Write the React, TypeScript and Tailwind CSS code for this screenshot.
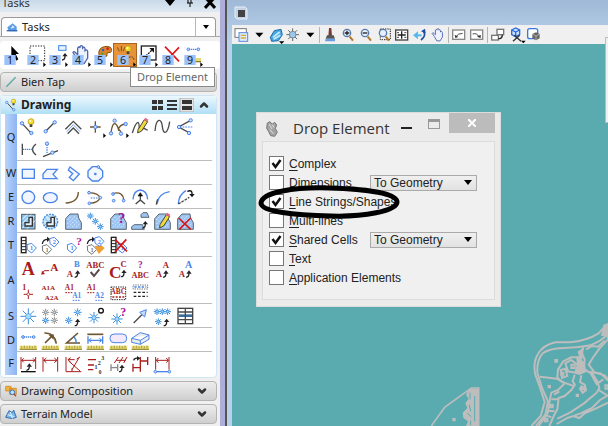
import { useState } from 'react'
import type { ReactNode } from 'react'
import { ChevronDown, ChevronUp } from 'lucide-react'

const BLUE = '#4a84e8'
const DARK = '#4a4a4a'
const BROWN = '#6e5630'
const RED = '#a81c1c'

type LineProps = { d: string; c?: string; w?: number; fill?: string; dash?: string }

const P = ({ d, c = DARK, w = 4, fill = 'none', dash }: LineProps) => (
  <path d={d} stroke={c} strokeWidth={w} fill={fill} strokeDasharray={dash} />
)

const Node = ({ x, y, r = 5 }: { x: number; y: number; r?: number }) => (
  <circle cx={x} cy={y} r={r} fill="#c9ddff" stroke={BLUE} strokeWidth={3} />
)

const Txt = ({ x, y, s, c = RED, children }: { x: number; y: number; s: number; c?: string; children: ReactNode }) => (
  <text x={x} y={y} fontSize={s} fill={c} textAnchor="middle" fontWeight="bold" className="font-['Liberation_Serif',serif]">
    {children}
  </text>
)

const Fly = () => <path d="M58 55l8 7l-8 7z" fill="#000" />

const Star = ({ x, y, r, c = '#3d8fe0' }: { x: number; y: number; r: number; c?: string }) => {
  const h = r * 0.7
  return (
    <g>
      <path
        d={`M${x - r} ${y}H${x + r}M${x} ${y - r}V${y + r}M${x - h} ${y - h}L${x + h} ${y + h}M${x + h} ${y - h}L${x - h} ${y + h}`}
        stroke={c}
        strokeWidth={3}
      />
      <circle cx={x} cy={y} r={r * 0.35} fill="#a8dcff" stroke={c} strokeWidth={2} />
    </g>
  )
}

const Blob = () => (
  <g>
    <path d="M11 58V26L24 12H48L50 24L58 38V58Z" fill="#9cc4f2" stroke="#5d6670" strokeWidth={3} />
    <path d="M16 30L28 18M16 42L42 16M18 52L46 24M30 52L50 32M42 52L54 40" stroke="#e4f1ff" strokeWidth={3} strokeDasharray="5 4" />
  </g>
)

const Arrow = ({ x, y }: { x: number; y: number }) => (
  <g transform={`translate(${x} ${y})`}>
    <path d="M0 20Q9 20 9 8" stroke="#222" strokeWidth={4} fill="none" />
    <path d="M1 9L9 -1L17 9Z" fill="#222" />
  </g>
)

const Hop = () => (
  <g>
    <path d="M10 30Q12 16 26 16" stroke="#222" strokeWidth={4} fill="none" />
    <path d="M24 8L34 16L24 24Z" fill="#222" />
  </g>
)

const Tag = ({ x, y, n, c = BLUE }: { x: number; y: number; n?: string; c?: string }) => (
  <g>
    <path d={`M${x - 14} ${y - 10}L${x} ${y - 14}L${x + 14} ${y}L${x} ${y + 15}L${x - 13} ${y + 5}Z`} fill="#fff" stroke={c} strokeWidth={3} />
    <Txt x={x} y={y + 7} s={19} c={c}>{n}</Txt>
  </g>
)

const Ruler = () => (
  <g>
    <rect x={8} y={50} width={52} height={12} fill="#e6db74" />
    <path d="M8 61H60" stroke="#8d7f2a" strokeWidth={3} />
    <path d="M14 52v6M22 50v8M30 52v6M38 50v8M46 52v6M54 50v8" stroke="#8d7f2a" strokeWidth={2} />
  </g>
)

const Bulb = ({ x, y }: { x: number; y: number }) => (
  <g>
    <circle cx={x} cy={y} r={9} fill="#f4dc2c" stroke="#b09414" strokeWidth={2} />
    <rect x={x - 4} y={y + 8} width={8} height={8} fill="#444" />
    <circle cx={x - 2} cy={y - 2} r={3} fill="#fffbd0" />
  </g>
)

const Pencil = () => (
  <g>
    <path d="M27 44L46 14L56 20L38 48L26 54Z" fill="#f0da3a" stroke="#444" strokeWidth={3} />
    <path d="M44 14L49 8L58 14L55 20Z" fill="#e8638c" />
  </g>
)

const Stack = () => (
  <g>
    <rect x={13} y={10} width={14} height={46} fill="#fff" stroke="#222" strokeWidth={4} />
    <path d="M13 20H27M13 29H27M13 38H27M13 47H27" stroke="#222" strokeWidth={3} />
  </g>
)

const Cross = () => <path d="M14 24L50 58M50 24L16 58" stroke="#d81414" strokeWidth={5} />

type Tool = [string, ReactNode]
type ToolRow = { key: string; tools: Tool[][] }

const toolRows: ToolRow[] = [
  {
    key: 'Q',
    tools: [
      [
        ['SmartLine', <><P d="M18 28L40 52" /><Node x={15} y={25} /><Node x={43} y={54} /><Bulb x={42} y={20} /></>],
        ['Line', <><P d="M20 49L47 22" /><Node x={20} y={49} /><Node x={47} y={22} /></>],
        ['Multi-line', <><P d="M10 43L34 19L58 43M17 56L34 39L51 56" /><P d="M14 50L34 29L54 50" c="#78a4ee" w={3} /></>],
        ['Point', <><P d="M34 19V53M18 36H50" c={BROWN} /><Node x={34} y={36} /><Fly /></>],
        ['Curve', <><P d="M12 53Q16 24 24 26Q30 28 34 42Q40 28 56 27M34 42L42 50" c={BROWN} /><Node x={12} y={55} /><Node x={23} y={17} /><Node x={42} y={56} /><Node x={56} y={27} /><Fly /></>],
        ['Stream curve', <><P d="M10 54Q20 22 27 22Q32 24 30 48Q40 40 46 40Q52 46 56 44" /><Pencil /></>],
        ['B-spline', <P d="M12 48C15 8 32 8 34 34S50 60 56 20" />],
        ['Angle bisector', <><P d="M50 16L14 36L45 53" /><P d="M18 36H58" c={BLUE} w={3} dash="5 3" /><Node x={50} y={16} /><Node x={45} y={54} /><Node x={15} y={36} /></>],
      ],
      [
        ['Minimum distance line', <><P d="M16 17V51M57 18Q36 34 57 51" /><P d="M18 34H46" c={BLUE} dash="4 2" /></>],
        ['Line at angle', <><P d="M12 56L57 38" /><P d="M24 20V48" c={BLUE} dash="4 3" /><Node x={24} y={17} /><Node x={40} y={44} /></>],
      ],
    ],
  },
  {
    key: 'W',
    tools: [[
      ['Block', <rect x={16} y={22} width={36} height={27} fill="#f2f6ff" stroke={BLUE} strokeWidth={4} />],
      ['Shape', <P d="M24 22H55L42 37L54 50H12V36Z" c={BLUE} fill="#f2f6ff" />],
      ['Orthogonal shape', <P d="M24 15L52 36L34 56L22 46L32 35L19 24Z" c={BLUE} fill="#f2f6ff" />],
      ['Regular polygon', <><P d="M25 14H43L56 27V45L43 57H25L12 45V27Z" c={BLUE} fill="#f2f6ff" /><circle cx={34} cy={36} r={4} fill={BLUE} /><Node x={43} y={15} r={4} /></>],
    ]],
  },
  {
    key: 'E',
    tools: [[
      ['Circle', <circle cx={34} cy={34} r={19} fill="#f0f5ff" stroke={BLUE} strokeWidth={4} />],
      ['Ellipse', <ellipse cx={34} cy={35} rx={21} ry={15} fill="#f0f5ff" stroke={BLUE} strokeWidth={4} />],
      ['Arc', <P d="M11 51Q48 50 49 18" c={BROWN} />],
      ['Half ellipse', <><P d="M14 20Q46 22 47 35Q46 50 16 52" c={BROWN} /><P d="M20 36H42" c={BLUE} w={3} dash="5 3" /><Node x={15} y={20} r={4} /><Node x={49} y={35} r={4} /><Node x={16} y={52} r={4} /></>],
      ['Quarter ellipse', <><P d="M20 22Q48 16 50 42" c={BROWN} /><Node x={18} y={24} r={4} /><Node x={20} y={44} r={4} /><Node x={50} y={44} r={4} /></>],
      ['Modify arc radius', <><P d="M12 40Q14 14 34 12Q54 14 56 40" c={BLUE} /><P d="M34 46V26M20 54L34 42L48 54" /><P d="M27 30L34 20L41 30Z" fill="#111" c="#111" w={2} /></>],
      ['Modify arc angle', <><P d="M18 54Q22 22 56 17" c={BLUE} /><P d="M16 56Q17 46 20 40" /></>],
      ['Modify arc axis', <><P d="M13 54Q14 26 36 14" c={BLUE} /><P d="M13 54L46 34" dash="8 3" /><P d="M40 16Q56 10 54 26" c="#111" /><path d="M46 24H62L54 34Z" fill="#111" /></>],
    ]],
  },
  {
    key: 'R',
    tools: [[
      ['Hatch area', <><rect x={14} y={13} width={40} height={44} fill="#8cc8f4" stroke="#555" strokeWidth={3} /><P d="M16 28L30 14M16 40L42 14M16 54L52 18M30 56L54 32" c="#f4fbff" w={3} /><P d="M46 22V48H24V38H36V22Z" c="#333" fill="#e4f1ff" /></>],
      ['Crosshatch area', <><circle cx={34} cy={35} r={22} fill="#c8e6fc" stroke="#3d8fe0" strokeWidth={4} strokeDasharray="6 3" /><P d="M16 24L44 52M24 14L54 44M16 46L48 18" c="#6cb0ea" w={3} /><P d="M46 22V48H24V38H36V22Z" c="#333" fill="#eef7ff" /></>],
      ['Pattern area', <Blob />],
      ['Linear pattern', <><Star x={19} y={18} r={10} /><Star x={34} y={34} r={10} /><Star x={49} y={50} r={10} /></>],
      ['Show pattern attributes', <><Blob /><Txt x={44} y={40} s={44} c="#b0109c">?</Txt></>],
      ['Match pattern', <><P d="M8 58V50L16 44H40L46 58Z" c="#5d6670" w={3} fill="#9cc4f2" /><P d="M36 22V14L42 8H54L60 22Z" c="#5d6670" w={3} fill="#9cc4f2" /><Arrow x={40} y={34} /></>],
      ['Change pattern', <><Blob /><Pencil /></>],
      ['Delete pattern', <><Blob /><Cross /></>],
    ]],
  },
  {
    key: 'T',
    tools: [[
      ['Attach tags', <><Stack /><Tag x={44} y={42} n="1" /></>],
      ['Edit tags', <><Hop /><Tag x={24} y={46} n="1" c="#777" /><Tag x={46} y={24} n="2" /></>],
      ['Review tags', <><Tag x={30} y={42} n="1" /><Txt x={51} y={34} s={34} c="#b0109c">?</Txt></>],
      ['Change tags', <><Hop /><Tag x={24} y={46} n="1" c="#777" /><path d="M32 36L44 60L62 42L52 34Z" fill="#f0a030" /><Tag x={46} y={22} n="2" /></>],
      ['Delete tags', <><Stack /><Tag x={46} y={42} n="1" /><P d="M24 16L60 52M58 16L24 54" c="#d81414" w={5} /></>],
    ]],
  },
  {
    key: 'A',
    tools: [
      [
        ['Place text', <Txt x={34} y={51} s={54}>A</Txt>],
        ['Place note', <><Txt x={46} y={38} s={34}>A</Txt><P d="M10 46L16 38H30" c={RED} w={3} /><path d="M7 50L9 38L18 48Z" fill={RED} /></>],
        ['Edit text', <><Txt x={24} y={58} s={26}>A</Txt><Txt x={45} y={28} s={26} c={BLUE}>B</Txt><Arrow x={38} y={38} /></>],
        ['Spell checker', <><Txt x={34} y={29} s={26}>ABC</Txt><P d="M20 42L30 54L46 34" c="#5b4a4a" w={6} /></>],
        ['Text attributes', <><Txt x={25} y={60} s={52}>C</Txt><Txt x={50} y={28} s={26}>C</Txt><Arrow x={42} y={36} /></>],
        ['Display text attributes', <><Txt x={34} y={60} s={25}>ABC</Txt><Txt x={34} y={30} s={28} c="#b0109c">?</Txt></>],
        ['Match text attributes', <><Txt x={24} y={58} s={26}>A</Txt><Txt x={45} y={29} s={26}>A</Txt><Arrow x={36} y={38} /></>],
        ['Change text attributes', <><Txt x={24} y={58} s={26}>A</Txt><Txt x={44} y={29} s={30} c={BLUE}>A</Txt><Arrow x={36} y={38} /></>],
      ],
      [
        ['Place text node', <><Txt x={22} y={28} s={24}>1</Txt><P d="M34 26V54M20 40H48" c={RED} w={3} /><circle cx={34} cy={40} r={4} fill="#fff" stroke={RED} strokeWidth={2} /></>],
        ['Copy and increment', <><Txt x={28} y={28} s={21}>A1A</Txt><Txt x={38} y={56} s={21}>A2A</Txt></>],
        ['Copy data field', <><Txt x={22} y={28} s={22}>A1</Txt><P d="M10 35H34" c={RED} w={3} dash="5 3" /><Txt x={44} y={50} s={22} c={BLUE}>A1</Txt><P d="M32 58H56" c={BLUE} w={3} dash="5 3" /></>],
        ['Increment data field', <><Txt x={22} y={28} s={22}>A1</Txt><P d="M10 35H34" c={RED} w={3} dash="5 3" /><Txt x={46} y={50} s={22} c={BLUE}>A2</Txt><P d="M34 58H58" c={BLUE} w={3} dash="5 3" /></>],
        ['Fill data field', <><rect x={12} y={18} width={44} height={38} fill="none" stroke="#222" strokeWidth={3} strokeDasharray="4 3" /><Txt x={34} y={40} s={22}>ABC</Txt><P d="M16 48H52" c={RED} dash="6 4" /></>],
        ['Auto fill data field', <><rect x={12} y={12} width={44} height={12} fill="none" stroke="#333" strokeWidth={2} strokeDasharray="4 3" /><P d="M16 18H52" c={BLUE} dash="7 4" /><P d="M14 34H56M14 46H56" c="#222" dash="8 5" /></>],
      ],
    ],
  },
  {
    key: 'S',
    tools: [[
      ['Place cell', <Star x={34} y={34} r={24} />],
      ['Cell matrix', <><Star x={20} y={22} r={11} c="#9a9088" /><Star x={46} y={22} r={11} c="#9a9088" /><Star x={20} y={46} r={11} /><Star x={46} y={46} r={11} c="#9a9088" /></>],
      ['Replace cell', <><Star x={20} y={46} r={11} /><Star x={47} y={22} r={12} /><Arrow x={38} y={42} /></>],
      ['Cell origin', <><Star x={30} y={38} r={17} /><circle cx={51} cy={17} r={7} fill="#fff" stroke="#111" strokeWidth={4} /></>],
      ['Identify cell', <><Star x={30} y={42} r={17} /><Txt x={49} y={34} s={36} c="#b0109c">?</Txt></>],
      ['Active line terminator', <><P d="M14 54L44 24" /><P d="M52 14L47 36L32 22Z" c={BLUE} w={3} fill="#c9ddff" /></>],
      ['Select and place cell', <><Star x={18} y={20} r={10} /><Star x={34} y={20} r={10} /><Star x={50} y={20} r={10} /><Star x={22} y={50} r={10} /><Arrow x={38} y={42} /></>],
      ['Cell library', <><rect x={12} y={10} width={44} height={46} fill="#fff" stroke="#444" strokeWidth={4} /><P d="M14 32H54" c="#3d6f9c" w={8} /><P d="M12 21H56M12 44H56M34 10V56" /></>],
    ]],
  },
  {
    key: 'D',
    tools: [[
      ['Measure distance', <><Ruler /><P d="M20 24H48" c={BLUE} dash="4 2" /><Node x={18} y={24} r={4} /><Node x={50} y={24} r={4} /></>],
      ['Measure radius', <><Ruler /><P d="M16 12Q46 10 52 44M18 42L38 22" c={BROWN} w={5} /><path d="M44 16V32L29 18Z" fill={BROWN} /></>],
      ['Measure angle', <><Ruler /><P d="M48 12L14 42H54" c={BROWN} w={5} /><P d="M36 24Q44 32 42 42" c={BLUE} /></>],
      ['Measure length', <><Ruler /><P d="M10 16H58" c={BROWN} w={5} /><P d="M12 22V44M56 22V44M16 34H52" c={BLUE} /><P d="M22 28L14 34L22 40M46 28L54 34L46 40" c={BLUE} w={3} /></>],
      ['Measure area', <><Ruler /><rect x={9} y={15} width={50} height={26} rx={12} fill="#f3e9fb" stroke={BLUE} strokeWidth={3} /></>],
      ['Measure volume', <><Ruler /><P d="M8 28L34 11L60 18V31L34 46L8 40ZM8 28L34 34L60 18M34 34V46" c={BLUE} w={3} fill="#ececec" /></>],
    ]],
  },
  {
    key: 'F',
    tools: [[
      ['Element dimension', <><P d="M12 12V48M56 12V48M14 22H54M20 16L14 22L20 28M48 16L54 22L48 28" c={RED} w={3} /><Arrow x={28} y={32} /><P d="M12 56H56" c="#111" /></>],
      ['Linear dimension', <P d="M12 12V56M56 12V56M14 22H54M22 15L14 22L22 29M46 15L54 22L46 29" c={RED} w={3} />],
      ['Angular dimension', <P d="M12 12V56H58M18 20H38M20 24L54 54M26 14L18 20L26 28M30 50L50 16M30 46V56M44 18L54 12" c={RED} w={3} />],
      ['Ordinate dimension', <><P d="M12 20H36M12 36H30M12 50H28" c={RED} /><Txt x={56} y={20} s={18} c="#333">3</Txt><Txt x={46} y={36} s={18} c="#333">2</Txt><Txt x={36} y={48} s={18} c="#333">1</Txt><Txt x={48} y={62} s={16} c="#333">0</Txt></>],
      ['Match dimension', <><P d="M22 30L34 12M36 30L48 12M28 22H56M50 30L60 12" c={RED} w={3} /><P d="M12 34V54M32 34V54M14 44H30" c="#888" /><Arrow x={36} y={36} /></>],
      ['Modify dimension', <><P d="M34 12V36M56 12V36M36 24H54M12 32V56M34 32V56M14 44H32" c={RED} /><P d="M14 22Q16 14 28 16" c="#222" /><path d="M24 9L34 16L24 23Z" fill="#222" /></>],
      ['Associate dimension', <><P d="M14 12V50M54 12V50M16 22H52M22 15L16 22L22 29M46 15L52 22L46 29" c={RED} w={3} /><P d="M16 56H52" c={BLUE} /><Node x={13} y={56} r={4} /><Node x={55} y={56} r={4} /></>],
    ]],
  },
]

const Hand = () => (
  <path
    d="M22 40L12 26Q14 20 20 26L26 32V12Q30 6 33 12V8Q37 2 41 8V12Q46 6 48 14V20Q54 14 56 22V42L46 58H32Z"
    fill="#eef2ff"
    stroke="#5068b0"
    strokeWidth={4}
  />
)

const mainTools: Tool[] = [
  ['Element selection', <path d="M31 6V42L38 34L46 50L52 46L44 30L54 30Z" fill="#000" />],
  ['Fence', <><rect x={18} y={6} width={44} height={44} fill="none" stroke="#222" strokeWidth={3} strokeDasharray="4 4" /><Fly /></>],
  ['Manipulate', <><rect x={38} y={5} width={22} height={14} fill="#e8f2ff" stroke="#3d86e8" strokeWidth={3} /><Arrow x={48} y={28} /><Fly /></>],
  ['View', <><Hand /><Fly /></>],
  ['Change attributes', <><path d="M24 34Q20 12 40 8Q62 4 62 20Q60 28 50 26Q46 30 48 36Q36 42 24 34Z" fill="#d88428" stroke="#8a4c10" strokeWidth={3} /><circle cx={36} cy={18} r={4} fill="#3060d0" /><circle cx={50} cy={14} r={4} fill="#d02020" /><circle cx={34} cy={29} r={3} fill="#30a040" /><Fly /></>],
  ['Drop Element', <><P d="M10 10L16 22M22 6V22M32 10L28 22" c="#7a5216" w={3} /><Bulb x={42} y={14} /><P d="M44 40Q60 34 60 50" c="#7a5216" dash="5 3" /><Fly /></>],
  ['Modify', <><rect x={16} y={6} width={44} height={42} fill="#fff" stroke="#222" strokeWidth={4} /><P d="M30 36L50 16" c="#111" dash="6 3" /><path d="M54 12V26L40 12Z" fill="#111" /><Fly /></>],
  ['Delete element', <P d="M18 8L60 52M60 10L24 48" c="#e01818" w={5} />],
  ['Measure', <><P d="M24 16H50" c={BLUE} dash="4 2" /><Node x={22} y={16} r={4} /><Node x={52} y={16} r={4} /><rect x={36} y={42} width={24} height={12} fill="#e6db74" /><P d="M36 53H60" c="#8d7f2a" /><Fly /></>],
]

const Icon = ({ children }: { children: ReactNode }) => (
  <svg viewBox="0 0 66 66" className="block h-[22px] w-[22px] overflow-visible" aria-hidden="true">
    {children}
  </svg>
)

const Magnifier = ({ sign }: { sign: string }) => (
  <>
    <P d="M36 38L46 50" c="#b07828" w={6} />
    <circle cx={28} cy={27} r={11} fill="#e4f0ff" stroke="#5a7cac" strokeWidth={4} />
    <P d={sign} c="#222" />
  </>
)

const viewTools: (Tool | null)[] = [
  ['View attributes', <><rect x={10} y={14} width={34} height={26} fill="#fff" stroke="#777" strokeWidth={3} /><rect x={22} y={26} width={26} height={26} fill="#dceaff" stroke="#5a8ad8" strokeWidth={3} /><P d="M27 34H43M27 42H43" c="#d8b030" /></>],
  ['View attributes menu', <path d="M20 26H44L32 40Z" fill="#000" />],
  ['Display style', <><path d="M14 40L26 20L46 16L50 32L38 50L18 52Z" fill="#4aa8e4" stroke="#206aa8" strokeWidth={3} /><P d="M22 40L42 24M24 46L44 34" c="#c4ecff" w={5} /><path d="M40 52H56L48 60Z" fill="#000" /></>],
  ['Brightness', <><Star x={30} y={32} r={19} c="#666" /><circle cx={30} cy={32} r={10} fill="#9cc8ee" stroke="#666" strokeWidth={2} /></>],
  ['Brightness menu', <path d="M20 26H44L32 40Z" fill="#000" />],
  null,
  ['Update view', <><path d="M28 12H35L37 36H26Z" fill="#7a3a3a" /><path d="M22 34H42L46 44H18Z" fill="#555" /><path d="M18 44H46V52H16Z" fill="#6c9ce0" /></>],
  ['Zoom in', <Magnifier sign="M21 27H35M28 20V34" />],
  ['Zoom out', <Magnifier sign="M21 27H35" />],
  ['Window area', <><rect x={20} y={15} width={30} height={32} fill="none" stroke="#222" strokeWidth={3} strokeDasharray="4 3" /><Magnifier sign="" /></>],
  ['Fit view', <><rect x={12} y={18} width={36} height={30} fill="#fff" stroke="#444" strokeWidth={4} /><P d="M30 22V44M18 33H42" c="#222" /><P d="M16 26H22M38 26H44M16 40H22M38 40H44" c="#444" w={3} /></>],
  ['Rotate view', <><P d="M40 20Q52 34 34 48" c="#1d4fa0" w={5} /><path d="M10 34L25 22V46Z" fill="#58b8f0" /><path d="M34 22L46 14L48 28Z" fill="#1d4fa0" /><P d="M24 34H36" c="#58b8f0" w={6} /></>],
  ['Pan view', <g transform="translate(5 10) scale(0.7)"><Hand /></g>],
  null,
  ['View previous', <><rect x={12} y={18} width={36} height={28} fill="#fff" stroke="#888" strokeWidth={4} /><P d="M22 38Q28 28 42 28" w={3} /><path d="M18 32L20 42L29 39Z" fill="#333" /></>],
  ['View next', <><rect x={12} y={18} width={36} height={28} fill="#fff" stroke="#888" strokeWidth={4} /><P d="M18 30Q32 26 36 38" w={3} /><path d="M31 38L42 42L42 32Z" fill="#333" /></>],
  null,
  ['Copy view', <><rect x={28} y={16} width={20} height={16} fill="#fff" stroke="#777" strokeWidth={4} /><rect x={12} y={34} width={20} height={14} fill="#fff" stroke="#777" strokeWidth={4} /><P d="M32 44Q44 44 44 32" c="#222" /></>],
  ['Clip volume', <><path d="M18 18L30 12L42 18V32L30 38L18 32Z" fill="#cfe2ff" stroke="#2a6cd8" strokeWidth={4} /><P d="M18 18L30 24L42 18M30 24V38" c="#2a6cd8" /><P d="M22 52L42 34M26 34L46 52" c="#333" /><path d="M46 50H60L53 58Z" fill="#000" /></>],
  ['Clip mask', <><rect x={12} y={14} width={30} height={30} rx={6} fill="#fff" stroke="#3a78e0" strokeWidth={4} /><path d="M26 30L37 25L48 30V43L37 49L26 43Z" fill="#666" /><P d="M26 30L37 36L48 30M37 36V49" c="#ccc" w={2} /></>],
]

const SectionBar = ({ title, icon }: { title: string; icon: ReactNode }) => (
  <button className="flex h-5 w-full items-center gap-1 rounded-sm border border-[#b4b4b4] bg-linear-to-b from-[#ededed] to-[#cfcfcf] px-1 text-left">
    <svg viewBox="0 0 36 36" className="h-3 w-3" aria-hidden="true">{icon}</svg>
    <span className="flex-1 text-[11px] text-[#222]">{title}</span>
    <ChevronDown size={12} strokeWidth={5} className="mr-1 text-[#333]" />
  </button>
)

const TaskPanel = () => (
  <aside className="flex w-[225px] shrink-0 flex-col border-r-[5px] border-[#aeaedb] bg-[#f0f0f0] font-['Noto_Sans',sans-serif]">
    <div className="flex h-3 items-start justify-between bg-linear-to-b from-[#c9d9e9] to-[#e0eaf3] pr-1 pl-0.5">
      <span className="text-[11px] leading-[6px] text-[#333]">Tasks</span>
      <div className="flex items-start gap-2.5">
        <svg viewBox="0 0 12 10" className="h-2.5 w-3" aria-hidden="true"><path d="M1 0H11L6 6Z" /></svg>
        <svg viewBox="0 0 8 10" className="h-2.5 w-2" aria-hidden="true"><path d="M1 3H7M4 3V7M2 0V3M5 0V3" stroke="#000" /></svg>
        <svg viewBox="0 0 12 10" className="h-2.5 w-3" aria-hidden="true"><path d="M1 -3L11 8M11 -3L1 8" stroke="#000" strokeWidth="3" /></svg>
      </div>
    </div>
    <div className="border-b border-[#a8a8a8] px-px pt-[5px]">
      <button className="flex h-[19px] w-[215px] items-center rounded-t border border-b-0 border-[#9a9a9a] bg-white text-left">
        <svg viewBox="0 0 36 30" className="mx-1 h-2.5 w-3" aria-hidden="true">
          <path d="M4 16L20 4L32 14V28H8Z" fill="#5c9de4" />
          <path d="M2 26H34" stroke="#3468b0" strokeWidth="4" />
          <path d="M14 20L20 10L26 16Z" fill="#e4f2ff" />
        </svg>
        <span className="flex-1 text-[11px] text-[#222]">Tasks</span>
        <span className="flex h-full w-5 items-center justify-center border-l border-[#b8b8b8]">
          <svg viewBox="0 0 6 4" className="h-1 w-1.5" aria-hidden="true"><path d="M0 0H6L3 4Z" /></svg>
        </span>
      </button>
    </div>
    <div className="relative mt-1 flex h-7 items-center rounded bg-white pl-px">
      <div className="grid w-[203px] grid-cols-9">
        {mainTools.map(([name, art], i) => (
          <button key={name} aria-label={name} className={name === 'Drop Element' ? 'bg-[#e8923a] outline outline-[#a86420]' : ''}>
            <svg viewBox="0 0 66 66" className="block h-[22px] w-[22px] overflow-visible" aria-hidden="true">
              {art}
              <rect x={10} y={33} width={34} height={30} fill="#9cc2fa" />
              <text x={18} y={60} fontSize={32} fill="#222">{i + 1}</text>
            </svg>
          </button>
        ))}
      </div>
      <div role="tooltip" className="absolute top-[26px] left-[130px] z-10 border border-[#8a8a8a] bg-white px-1.5 text-[11px] leading-[18px] whitespace-nowrap text-[#666]">
        Drop Element
      </div>
    </div>
    <div className="mt-[3px] flex flex-1 flex-col gap-[3px] pr-[3px]">
      <SectionBar title="Bien Tap" icon={<P d="M4 32L32 4" c="#5fa8a0" />} />
      <section className="rounded border border-[#cfe6f5] bg-white">
        <h2 className="flex h-[18px] items-center gap-1 bg-linear-to-b from-[#ecf7fd] to-[#b0dff5] px-1 text-xs font-bold text-[#222]">
          <svg viewBox="8 8 48 54" className="h-3.5 w-3" aria-hidden="true">
            <P d="M18 28L40 52" /><Node x={15} y={25} /><Node x={43} y={54} /><Bulb x={42} y={20} />
          </svg>
          <span className="flex-1">Drawing</span>
          <svg viewBox="0 0 42 14" className="h-3.5 w-[42px]" aria-hidden="true">
            <rect x="28" width="14" height="14" fill="#e4e4e4" stroke="#aaa" />
            <path d="M0 2H5V6H0ZM6 2H11V6H6ZM0 8H5V12H0ZM6 8H11V12H6ZM30 2H40V6H30ZM30 8H40V12H30ZM15 2H25V4H15ZM15 6H25V8H15ZM15 10H25V12H15Z" fill="#333" />
          </svg>
          <ChevronUp size={12} strokeWidth={5} className="mr-0.5 text-[#333]" />
        </h2>
        <div className="pr-1 pb-0.5 pl-1">
          {toolRows.map((row) => (
            <div key={row.key} className="flex">
              <div className="flex w-3 items-center justify-center bg-linear-to-r from-[#b8d4fc] to-[#8db4f2] text-[11px] text-[#222]">
                {row.key}
              </div>
              <div className={`flex-1 ${row.key === 'F' ? '' : 'border-b border-[#bdbdbd]'}`}>
                {row.tools.map((line) => (
                  <div key={line[0][0]} className="mr-4 grid h-[23px] grid-cols-8 items-center">
                    {line.map(([name, art]) => (
                      <button key={name} aria-label={name}><Icon>{art}</Icon></button>
                    ))}
                  </div>
                ))}
              </div>
            </div>
          ))}
        </div>
      </section>
      <SectionBar
        title="Drawing Composition"
        icon={<><path d="M2 4H18V18H2ZM14 10H34V28H14Z" fill="#f4b43c" stroke="#c87c14" strokeWidth={2} /><circle cx={22} cy={22} r={7} fill="#bfe0ff" stroke="#3470c0" strokeWidth={3} /><P d="M27 27L33 34" c="#b84c14" /></>}
      />
      <SectionBar
        title="Terrain Model"
        icon={<><path d="M2 28L12 8L22 14L26 6L34 28L22 32Z" fill="#79b8ec" stroke="#3a70b0" strokeWidth={3} /><P d="M8 20L28 26M16 12L22 32" c="#dff0ff" w={3} /></>}
      />
    </div>
  </aside>
)

type Option = { hot: string; rest: string; checked?: boolean; method?: boolean; circled?: boolean }

const dropOptions: Option[] = [
  { hot: 'C', rest: 'omplex', checked: true },
  { hot: 'D', rest: 'imensions', method: true },
  { hot: 'L', rest: 'ine Strings/Shapes', checked: true, circled: true },
  { hot: 'M', rest: 'ulti-lines' },
  { hot: 'S', rest: 'hared Cells', checked: true, method: true },
  { hot: 'T', rest: 'ext' },
  { hot: 'A', rest: 'pplication Elements' },
]

const OptionRow = ({ option }: { option: Option }) => {
  const [checked, setChecked] = useState(!!option.checked)
  const name = option.hot + option.rest

  return (
    <div className="relative flex h-[19px] items-center">
      <label className="flex w-[101px] items-center gap-[5px] whitespace-nowrap">
        <span className="grid shrink-0">
          <input
            type="checkbox"
            checked={checked}
            onChange={(e) => setChecked(e.target.checked)}
            className="col-start-1 row-start-1 h-[15px] w-[15px] appearance-none border border-[#777] bg-white"
          />
          {checked && (
            <svg viewBox="0 0 15 15" className="pointer-events-none col-start-1 row-start-1 h-[15px] w-[15px]" aria-hidden="true">
              <path d="M3.5 7L6.5 11L11.5 4" stroke="#111" strokeWidth="2.5" fill="none" />
            </svg>
          )}
        </span>
        <span><u className="underline-offset-2">{option.hot}</u>{option.rest}</span>
      </label>
      {option.method && (
        <div className="grid w-[107px] items-center">
          <select aria-label={`${name} method`} className="col-start-1 row-start-1 h-4 appearance-none border border-[#aaa] bg-linear-to-b from-[#f0f0f0] to-[#e2e2e2] pl-[3px] leading-[14px]">
            <option>To Geometry</option>
          </select>
          <svg viewBox="0 0 8 5" className="pointer-events-none col-start-1 row-start-1 mr-[5px] h-[5px] w-2 justify-self-end" aria-hidden="true">
            <path d="M0 0H8L4 5Z" />
          </svg>
        </div>
      )}
      {option.circled && (
        <svg viewBox="0 0 144 36" className="pointer-events-none absolute -top-2 -left-3 z-10 h-9 w-36" aria-hidden="true">
          <path d="M4 19C5 8 38 3 72 4C112 5 140 10 140 18C140 27 106 33 74 32C38 31 4 28 4 19Z" fill="none" stroke="#000" strokeWidth="5" />
        </svg>
      )}
    </div>
  )
}

const DropDialog = () => (
  <div role="dialog" aria-label="Drop Element" className="absolute top-[68px] left-6 w-[245px] border border-[#dcdcdc] bg-[#ebebeb] px-[5px] pb-1.5">
    <div className="flex h-7 items-start">
      <svg viewBox="0 0 36 48" className="mt-2 ml-1 h-4 w-3" aria-hidden="true">
        <path d="M4 6L12 2L18 10L26 4L32 12L28 22L34 34L26 46L14 44L8 32L2 22Z" fill="#a4a4a4" stroke="#777" strokeWidth="3" />
        <path d="M10 10L18 24M18 10L24 20M12 26L22 38" stroke="#e0e0e0" strokeWidth="3" />
      </svg>
      <h1 className="mt-1 ml-[15px] flex-1 font-['Open_Sans',sans-serif] text-[15px] leading-[22px] whitespace-nowrap text-[#333]">Drop Element</h1>
      <button aria-label="Minimize" className="mt-3.5 h-0.5 w-[11px] bg-[#222]" />
      <button aria-label="Maximize" className="mt-1.5 ml-4 h-2.5 w-3 border border-t-[3px] border-[#999]" />
      <button aria-label="Close" className="ml-[9px] flex h-5 w-[46px] items-center justify-center bg-[#bcbcbc]">
        <svg viewBox="0 0 8 8" className="h-2 w-2" aria-hidden="true"><path d="M0 0L8 8M8 0L0 8" stroke="#fff" strokeWidth="2" /></svg>
      </button>
    </div>
    <div className="border border-[#dcdcdc] bg-[#f0f0f0] pt-3 pb-3 pl-1.5 font-['Liberation_Sans',Arial,sans-serif] text-xs text-[#222]">
      {dropOptions.map((option) => (
        <OptionRow key={option.rest} option={option} />
      ))}
    </div>
  </div>
)

const MapLines = () => (
  <svg viewBox="0 0 534 390" className="absolute right-0 bottom-0 h-[130px] w-[178px]" fill="none" stroke="#bdbdbd" strokeWidth={6} aria-hidden="true">
    <path d="M4 390L44 334L110 286L124 276H146V390" strokeWidth={5} />
    <path d="M118 278H147V390H108L114 376L100 366L98 350L112 336L106 322L116 308L108 296Z" fill="#bdbdbd" stroke="none" />
    <path d="M120 290V310M118 326L122 346M112 352L124 362M134 300V376M122 374V388" stroke="#5aabb0" strokeWidth={3} />
    <path d="M534 86L520 96L506 112Q470 134 420 139H376Q338 148 324 174Q308 200 316 236L330 274L344 318L332 360L304 390" />
    <path d="M534 116L510 134L482 148Q440 156 400 156Q356 158 338 172Q320 192 322 230L336 276L354 316L346 356L318 390" />
    <path d="M520 90L534 84V130L508 158L488 186L476 206L494 230L524 238L534 250" />
    <path d="M524 92L534 90V120L516 116Z" fill="#bdbdbd" />
    <path d="M460 154L448 184L424 184L400 196L384 220L382 244L394 256L404 262L384 282L364 290L358 320L354 350L326 390M468 160L486 150L504 152L524 134M454 168L464 190L462 218L482 232" />
    <path d="M442 186L460 200L466 226L448 234L436 230L444 208ZM446 168L458 160L454 190Z" fill="#bdbdbd" />
    <path d="M330 242L380 248L402 260L432 270L424 282L404 300L386 306L382 340L372 358L358 390M406 202L424 192L444 208L436 230L414 226ZM392 222L406 218L412 240L396 246ZM434 236L428 256L436 268M454 238L450 258L464 266L468 282L458 290L450 278L456 268" />
    <path d="M382 368L420 350L462 322L500 290L508 276L502 256L484 228L512 232L534 254M380 384L412 366L430 360L448 366L464 352L492 340L534 320M534 298L510 312L486 336L452 352L434 358M506 282L534 300M482 232L500 264L520 250M372 296L388 286M364 310H384M352 344L374 346M344 356L364 364" />
    <path d="M424 206H434V216H424ZM394 230H400V236H394ZM360 326H368V334H360ZM344 368H352V376H344ZM526 268H534V278H526ZM456 274H462V280H456ZM376 192H381V197H376ZM356 270H360V274H356ZM440 296H444V300H440ZM70 369H74V373H70Z" />
  </svg>
)

const App = () => (
  <div className="flex h-screen overflow-hidden bg-[#b8cfe8]">
    <TaskPanel />
    <main className="flex min-w-0 flex-1 flex-col border-l-2 border-[#555] bg-linear-to-b from-[#9fb9d6] to-[#b9d1ea] to-10% pl-[5px]">
      <div className="flex h-[25px] items-center pl-0.5">
        <svg viewBox="0 0 14 14" className="h-3.5 w-3.5" aria-hidden="true">
          <path d="M1 1H11L13 3V13H3L1 11Z" fill="#c4d3e2" stroke="#e4eef8" />
          <rect x="4" y="4" width="7" height="7" fill="#444" />
        </svg>
      </div>
      <div className="flex h-[19px] items-center bg-[#f0f0f0] pl-px">
        {viewTools.map((tool, i) =>
          tool ? (
            <button key={tool[0]} aria-label={tool[0]} className={i < 5 ? 'w-[17px]' : 'w-[18px]'}>
              <svg viewBox="4 6 54 54" className="block h-[18px] w-[18px] overflow-visible" aria-hidden="true">{tool[1]}</svg>
            </button>
          ) : (
            <span key={i} className="mx-px h-4 w-px bg-[#b4b4b4]" />
          ),
        )}
      </div>
      <div className="relative flex-1 bg-[#5aabb0]">
        <MapLines />
        <DropDialog />
        <div className="absolute -top-[7px] right-0 h-[86px] w-[3px] border border-r-0 border-[#bbb] bg-[#f0f0f0]" />
      </div>
    </main>
  </div>
)

export default App
